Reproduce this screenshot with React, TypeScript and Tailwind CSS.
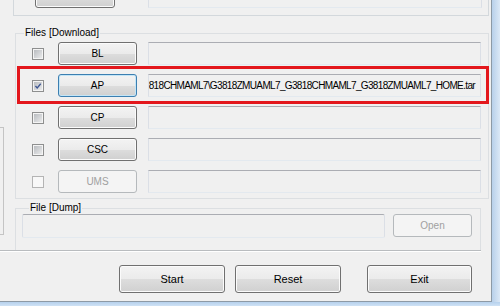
import React from "react";

const btnNormal =
  "flex items-center justify-center rounded-[3px] border border-[#707070] bg-[linear-gradient(#f3f3f3,#ebebeb_50%,#dddddd_51%,#d0d0d0)] shadow-[inset_0_0_0_1px_#fbfbfb] text-black";
const btnFocus =
  "flex items-center justify-center rounded-[3px] border border-[#3c7fb1] bg-[linear-gradient(#f3f3f3,#ebebeb_50%,#dddddd_51%,#d0d0d0)] shadow-[inset_0_0_0_1px_#c4e5f6] text-black";
const btnDisabled =
  "flex items-center justify-center rounded-[3px] border border-[#b5b9bc] bg-[#f4f4f4] text-[#a0a0a0]";
const textBox =
  "border border-t-[#abadb3] border-l-[#dbdfe6] border-r-[#dbdfe6] border-b-[#e3e9ef] bg-[#f0f0f0]";

function Check({ checked, disabled }: { checked?: boolean; disabled?: boolean }) {
  if (disabled) {
    return <div className="w-[12px] h-[12px] border border-[#b4b4b4] bg-[#f8f8f8]" />;
  }
  return (
    <div className="w-[12px] h-[12px] border border-[#8e8f8f] bg-[#f4f4f4] p-[1px]">
      <div className="w-full h-full bg-[linear-gradient(135deg,#b9bcc0,#e9eaeb)] flex items-center justify-center">
        {checked && (
          <svg width="10" height="10" viewBox="0 0 10 10">
            <path d="M1.8 5 L4 7.4 L8.4 2.2" fill="none" stroke="#3d5592" strokeWidth="1.6" />
          </svg>
        )}
      </div>
    </div>
  );
}

function Row({
  label,
  checked,
  disabled,
  focused,
  text,
}: {
  label: string;
  checked?: boolean;
  disabled?: boolean;
  focused?: boolean;
  text?: string;
}) {
  const cls = disabled ? btnDisabled : focused ? btnFocus : btnNormal;
  return (
    <div className="flex items-center h-[23px]">
      <div className="ml-[16px]">
        <Check checked={checked} disabled={disabled} />
      </div>
      <div className={`ml-[14px] w-[79px] h-[23px] ${cls}`}>{label}</div>
      <div
        className={`ml-[11px] w-[333px] h-[23px] ${textBox} flex items-center justify-end overflow-hidden whitespace-nowrap pr-[5px] tracking-[-0.65px]`}
      >
        {text}
      </div>
    </div>
  );
}

export default function App() {
  return (
    <div className="w-[500px] h-[306px] overflow-hidden flex flex-col bg-[#c3d9ef] font-['Liberation_Sans',Arial,sans-serif] text-[10px] leading-[12px] text-black">
      <div className="flex h-[302px] shrink-0">
        <div className="w-[492px] h-[302px] bg-[#f0f0f0] border-r border-b border-[#8d9aa6] flex flex-col">
          <div className="flex h-[250px]">
            <div className="w-[13px] shrink-0">
              <div className="mt-[127px] h-[108px] w-[4px] border-t border-r border-b border-[#c4c4c4]" />
            </div>
            <div className="w-[476px] flex flex-col">
              {/* Pit group */}
              <div className="h-[16px] border-l border-r border-b border-[#d3d8dc] flex items-end pb-[7px] overflow-hidden">
                <div className={`ml-[21px] w-[80px] h-[23px] shrink-0 ${btnNormal}`}>PIT</div>
                <div className={`ml-[33px] w-[334px] h-[22px] shrink-0 ${textBox}`} />
              </div>
              {/* Files group */}
              <fieldset className="ml-[2px] mt-[11px] w-[474px] h-[172px] border border-[#dcdfe2] pt-[3px] pb-[5px]">
                <legend className="ml-[8px] px-[1px] leading-[12px]">Files [Download]</legend>
                <div className="relative flex flex-col gap-[9px]">
                  <Row label="BL" />
                  <Row
                    label="AP"
                    checked
                    focused
                    text="C:\Firmware\G3818ZMUAML7_G3818CHMAML7\G3818ZMUAML7_G3818CHMAML7_G3818ZMUAML7_HOME.tar"
                  />
                  <Row label="CP" />
                  <Row label="CSC" />
                  <Row label="UMS" disabled />
                  <div className="absolute left-[1px] top-[24px] w-[472px] h-[38px] border-[3px] border-[#e3171c]" />
                </div>
              </fieldset>
              {/* Dump group */}
              <fieldset className="ml-[2px] mt-[3px] w-[466px] h-[48px] border-t border-l border-r border-b-0 border-[#dcdfe2]">
                <legend className="ml-[13px] px-[1px] leading-[12px]">File [Dump]</legend>
                <div className="flex items-start">
                  <div className={`ml-[6px] w-[363px] h-[24px] rounded-[2px] ${textBox}`} />
                  <div className={`ml-[8px] w-[79px] h-[23px] ${btnDisabled}`}>Open</div>
                </div>
              </fieldset>
            </div>
          </div>
          <div className="w-[481px] h-[2px] border-t border-[#b9bcbf] bg-white" />
          <div className="flex mt-[13px] text-[11px]">
            <div className={`ml-[119px] w-[106px] h-[28px] ${btnNormal}`}>Start</div>
            <div className={`ml-[10px] w-[106px] h-[28px] ${btnNormal}`}>Reset</div>
            <div className={`ml-[26px] w-[105px] h-[28px] ${btnNormal}`}>Exit</div>
          </div>
        </div>
        <div className="flex-1 bg-[linear-gradient(90deg,#b8d0ea,#dbe8f6)]" />
      </div>
      <div className="flex-1 bg-[linear-gradient(#b6d1ed,#cfe2f5)]" />
    </div>
  );
}
